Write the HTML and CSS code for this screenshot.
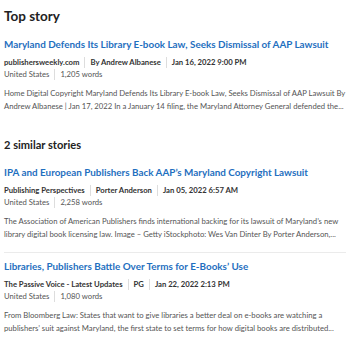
FILE: index.html
```html
<!doctype html>
<html>
<head>
<meta charset="utf-8">
<title>Stories</title>
<link rel="stylesheet" href="styles.css">
</head>
<body>
<div class="page">
  <h2 class="sec_title">Top story</h2>
  <div class="story">
    <a class="story_title" href="#">Maryland Defends Its Library E-book Law, Seeks Dismissal of AAP Lawsuit</a>
    <div class="meta">
      <span>publishersweekly.com</span><span>By Andrew Albanese</span><span>Jan 16, 2022 9:00 PM</span>
    </div>
    <div class="meta meta2">
      <span>United States</span><span>1,205 words</span>
    </div>
    <p class="snippet">Home Digital Copyright Maryland Defends Its Library E-book Law, Seeks Dismissal of AAP Lawsuit By Andrew Albanese | Jan 17, 2022 In a January 14 filing, the Maryland Attorney General defended the...</p>
  </div>

  <h3 class="sec_title sub">2 similar stories</h3>
  <div class="story">
    <a class="story_title" href="#">IPA and European Publishers Back AAP’s Maryland Copyright Lawsuit</a>
    <div class="meta">
      <span>Publishing Perspectives</span><span>Porter Anderson</span><span>Jan 05, 2022 6:57 AM</span>
    </div>
    <div class="meta meta2">
      <span>United States</span><span>2,258 words</span>
    </div>
    <p class="snippet">The Association of American Publishers finds international backing for its lawsuit of Maryland’s new library digital book licensing law. Image – Getty iStockphoto: Wes Van Dinter By Porter Anderson,...</p>
  </div>
  <div class="story divided">
    <a class="story_title" href="#">Libraries, Publishers Battle Over Terms for E-Books’ Use</a>
    <div class="meta">
      <span>The Passive Voice - Latest Updates</span><span>PG</span><span>Jan 22, 2022 2:13 PM</span>
    </div>
    <div class="meta meta2">
      <span>United States</span><span>1,080 words</span>
    </div>
    <p class="snippet">From Bloomberg Law: States that want to give libraries a better deal on e-books are watching a publishers’ suit against Maryland, the first state to set terms for how digital books are distributed...</p>
  </div>
</div>
</body>
</html>
```
FILE: styles.css
```css
*{ padding:0; margin:0;}
body{ background-color:#fff; font-family:Lato, "Open Sans", sans-serif; color:#333;}
.page{ padding:8px 4px 0 4px;}
.sec_title{ font-size:13.5px; font-weight:bold; color:#222; line-height:16px;}
.sec_title.sub{ font-size:11.1px; line-height:14px; margin-top:26px;}
.story{ margin-top:14px;}
.story.divided{ border-top:1px solid #ebebeb; margin-top:12px; padding-top:7px;}
.story_title{ display:block; font-size:9.9px; font-weight:bold; color:#1f6fc0; text-decoration:none; line-height:13px;}
.meta{ display:flex; font-size:7.7px; font-weight:bold; color:#333; line-height:11px; margin-top:6px;}
.meta span{ padding:0 5px; border-left:1px solid #ddd;}
.meta span:first-child{ padding-left:0; border-left:none;}
.meta2{ font-weight:normal; color:#555; margin-top:1px;}
.snippet{ font-size:7.7px; color:#555; line-height:12.5px; margin-top:7px;}
```
